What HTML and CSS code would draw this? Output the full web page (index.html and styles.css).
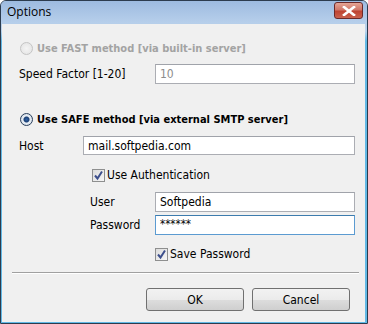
FILE: index.html
```html
<!DOCTYPE html>
<html lang="en">
<head>
<meta charset="UTF-8" />
<title>Options</title>
<link rel="stylesheet" href="styles.css">
</head>
<body>
  <div class="fenetre">
    <div class="barre-titre">
      <span class="titre">Options</span>
      <span class="btn-fermer">
        <svg width="14" height="10" viewBox="0 0 14 10"><path d="M2 1 L12 9 M12 1 L2 9" stroke="#fff" stroke-width="2.6" stroke-linecap="square"/></svg>
      </span>
    </div>
    <div class="contenu">
      <div class="ligne-radio disabled">
        <span class="radio"></span>
        <span class="texte-gras">Use FAST method [via built-in server]</span>
      </div>
      <div class="ligne ligne-speed">
        <span class="label label-large">Speed Factor [1-20]</span>
        <span class="champ grise">10</span>
      </div>
      <div class="ligne-radio ligne-safe">
        <span class="radio coche"></span>
        <span class="texte-gras">Use SAFE method [via external SMTP server]</span>
      </div>
      <div class="ligne ligne-host">
        <span class="label label-court">Host</span>
        <span class="champ">mail.softpedia.com</span>
      </div>
      <div class="ligne-check ligne-auth">
        <span class="case"><svg width="11" height="11" viewBox="0 0 11 11"><path d="M2 5.5 L4.5 8.5 L9 1.5" fill="none" stroke="#3d4f8c" stroke-width="2"/></svg></span>
        <span>Use Authentication</span>
      </div>
      <div class="ligne ligne-user">
        <span class="label label-moyen">User</span>
        <span class="champ">Softpedia</span>
      </div>
      <div class="ligne ligne-pass">
        <span class="label label-moyen">Password</span>
        <span class="champ actif">******</span>
      </div>
      <div class="ligne-check ligne-save">
        <span class="case"><svg width="11" height="11" viewBox="0 0 11 11"><path d="M2 5.5 L4.5 8.5 L9 1.5" fill="none" stroke="#3d4f8c" stroke-width="2"/></svg></span>
        <span>Save Password</span>
      </div>
      <div class="separateur"></div>
      <div class="boutons">
        <button>OK</button>
        <button>Cancel</button>
      </div>
    </div>
  </div>
</body>
</html>
```
FILE: styles.css
```css
:root {
  --police: Tahoma, "DejaVu Sans Condensed", "Liberation Sans", sans-serif;
}
body {
  margin: 0;
  background: #ffffff;
  font-family: var(--police);
  font-size: 12px;
  color: #000;
}
.fenetre {
  width: 368px;
  height: 324px;
  box-sizing: border-box;
  border: 1px solid #2c3c4e;
  border-radius: 6px 6px 0 0;
  background: linear-gradient(#a5c1e3, #bcd3ec 30px, #62b9e6 40px, #62b9e6);
  display: flex;
  flex-direction: column;
  overflow: hidden;
}
.barre-titre {
  height: 22px;
  display: flex;
  align-items: center;
  justify-content: space-between;
  padding: 0 4px 0 6px;
  background: linear-gradient(#9dbbe0, #b7cfeb);
}
.titre {
  font-family: "Open Sans", "Liberation Sans", sans-serif;
  font-size: 12px;
  color: #000;
  margin-top: -1px;
}
.btn-fermer {
  width: 27px;
  height: 15px;
  margin-top: -3px;
  border: 1px solid #6c2a2a;
  border-radius: 3px;
  background: linear-gradient(#e5a595, #d0786a 45%, #bf4432 55%, #c9624f);
  display: flex;
  align-items: center;
  justify-content: center;
}
.contenu {
  flex: 1;
  margin: 1px 2px 1px 1px;
  background: #f0f0f0;
  padding: 0 0 0 17px;
  position: relative;
}
.ligne-radio {
  display: flex;
  align-items: center;
  height: 14px;
  margin-top: 17px;
  gap: 4px;
  padding-left: 1px;
}
.ligne-safe {
  margin-top: 28px;
}
.texte-gras {
  font-weight: bold;
  font-size: 11px;
}
.disabled .texte-gras {
  color: #a3a3a3;
}
.radio {
  width: 11px;
  height: 11px;
  border-radius: 50%;
  border: 1px solid #2a3f5c;
  background: radial-gradient(circle, #2f63a8 0, #1b3f74 2.5px, #e8eef5 3.5px, #c9d2dc);
}
.disabled .radio {
  border-color: #c4c4c4;
  background: radial-gradient(circle, #f4f4f4, #e2e2e2);
}
.ligne {
  display: flex;
  align-items: center;
}
.label {
  flex: none;
}
.label-large { width: 136px; }
.label-court { width: 64px; }
.label-moyen { width: 65px; }
.ligne-speed { margin-top: 9px; }
.ligne-host { margin-top: 10px; }
.ligne-user { margin-top: 10px; padding-left: 71px; }
.ligne-pass { margin-top: 3px; padding-left: 71px; }
.champ {
  box-sizing: border-box;
  height: 20px;
  width: 200px;
  border: 1px solid #abadb3;
  border-top-color: #a0a3aa;
  background: #fff;
  padding: 0 4px;
  display: flex;
  align-items: center;
  font-size: 12px;
}
.ligne-host .champ {
  width: 272px;
  height: 19px;
}
.grise {
  color: #8d8d8d;
}
.actif {
  border-color: #5b9bd1;
  border-top-color: #3d7bad;
  font-size: 11.5px;
  align-items: flex-start;
  padding-top: 1px;
}
.ligne-check {
  display: flex;
  align-items: center;
  gap: 2px;
  height: 14px;
  font-size: 12px;
}
.ligne-auth { margin-top: 13px; padding-left: 73px; }
.ligne-save { margin-top: 12px; padding-left: 136px; }
.case {
  width: 11px;
  height: 11px;
  border: 1px solid #8e8f8f;
  background: linear-gradient(135deg, #dcdcdc, #f6f6f6);
  display: flex;
  align-items: center;
  justify-content: center;
}
.separateur {
  height: 1px;
  background: #a0a0a0;
  border-bottom: 1px solid #fff;
  margin: 11px 6px 0 -7px;
}
.boutons {
  display: flex;
  justify-content: flex-end;
  gap: 8px;
  margin-top: 14px;
  padding-right: 15px;
}
button {
  width: 98px;
  height: 23px;
  border: 1px solid #707070;
  border-radius: 3px;
  background: linear-gradient(#f2f2f2, #ebebeb 50%, #dddddd 51%, #cfcfcf);
  font-family: var(--police);
  font-size: 12px;
  color: #000;
  padding: 0;
}
```
